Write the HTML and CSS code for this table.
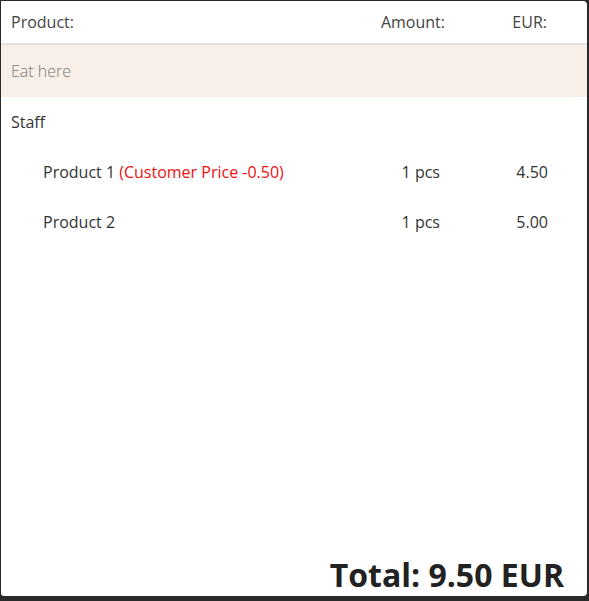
FILE: index.html
```html
<!DOCTYPE html>
<html>
<head>
<meta charset="utf-8">
<link rel="stylesheet" href="styles.css">
</head>
<body>
<div class="panel">
  <div class="head">
    <span class="c-prod">Product:</span>
    <span class="c-amt">Amount:</span>
    <span class="c-eur">EUR:</span>
  </div>
  <div class="place">Eat here</div>
  <div class="group">Staff</div>
  <div class="row">
    <span class="c-prod">Product 1 <span class="note">(Customer Price -0.50)</span></span>
    <span class="c-amt">1 pcs</span>
    <span class="c-eur">4.50</span>
  </div>
  <div class="row">
    <span class="c-prod">Product 2</span>
    <span class="c-amt">1 pcs</span>
    <span class="c-eur">5.00</span>
  </div>
  <div class="spacer"></div>
  <div class="total">Total: 9.50 EUR</div>
</div>
</body>
</html>
```
FILE: styles.css
```css
html, body {
  margin: 0;
  padding: 0;
  background: #2a2a2a;
  width: 589px;
  height: 601px;
  overflow: hidden;
}
body {
  font-family: "Open Sans", "Noto Sans", sans-serif;
  font-size: 16px;
  color: #333;
}
.panel {
  margin: 1px 2px 0 1px;
  height: 595px;
  background: #fff;
  border-radius: 0 4px 4px 3px;
  display: flex;
  flex-direction: column;
}
.head {
  height: 42px;
  border-bottom: 2px solid #e2e2e2;
  display: grid;
  grid-template-columns: 1fr 90px 102px;
  align-items: center;
  padding: 0 40px 0 10px;
  color: #444;
}
.head .c-amt, .head .c-eur { text-align: right; }
.place {
  height: 52px;
  background: #f8f0e8;
  display: flex;
  align-items: center;
  padding-left: 10px;
  color: #777;
  font-weight: 300;
}
.group {
  height: 50px;
  display: flex;
  align-items: center;
  padding-left: 10px;
  color: #333;
}
.row {
  height: 50px;
  display: grid;
  grid-template-columns: 1fr 90px 108px;
  align-items: center;
  padding: 0 39px 0 42px;
  color: #333;
}
.row .c-amt, .row .c-eur { text-align: right; }
.note { color: #ee1111; }
.spacer { flex: 1; }
.total {
  text-align: right;
  font-weight: 700;
  font-size: 32px;
  line-height: 40px;
  padding-right: 23px;
  padding-bottom: 1px;
  color: #222;
}
```
